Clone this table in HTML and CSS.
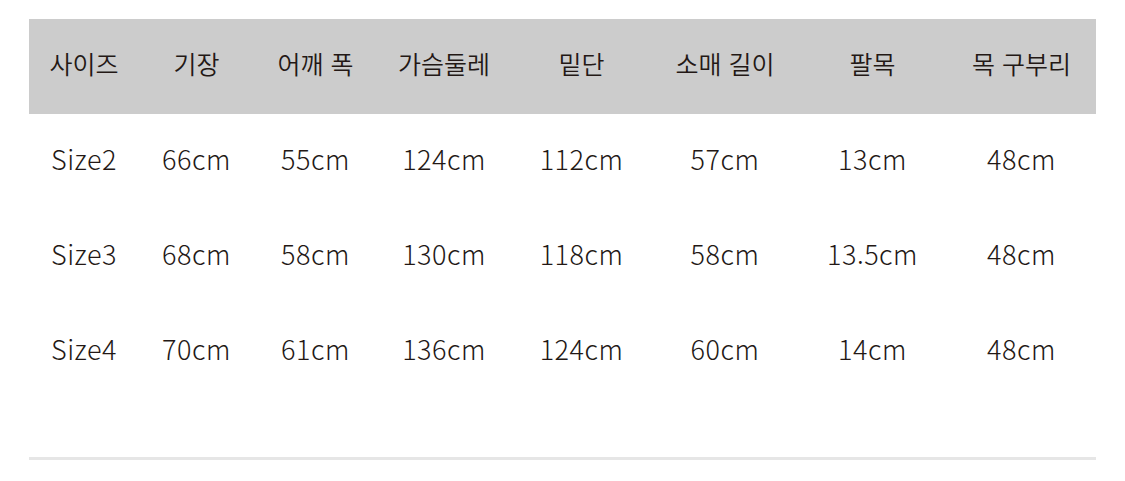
FILE: index.html
```html
<!DOCTYPE html>
<html lang="ko">
<head>
<meta charset="utf-8">
<link rel="stylesheet" href="styles.css">
</head>
<body>
<div class="wrap">
  <table class="size-table">
    <thead>
      <tr>
        <th class="c1">사이즈</th>
        <th class="c2">기장</th>
        <th class="c3">어깨 폭</th>
        <th class="c4">가슴둘레</th>
        <th class="c5">밑단</th>
        <th class="c6">소매 길이</th>
        <th class="c7">팔목</th>
        <th class="c8">목 구부리</th>
      </tr>
    </thead>
    <tbody>
      <tr>
        <td>Size2</td><td>66cm</td><td>55cm</td><td>124cm</td><td>112cm</td><td>57cm</td><td>13cm</td><td>48cm</td>
      </tr>
      <tr>
        <td>Size3</td><td>68cm</td><td>58cm</td><td>130cm</td><td>118cm</td><td>58cm</td><td>13.5cm</td><td>48cm</td>
      </tr>
      <tr>
        <td>Size4</td><td>70cm</td><td>61cm</td><td>136cm</td><td>124cm</td><td>60cm</td><td>14cm</td><td>48cm</td>
      </tr>
    </tbody>
  </table>
</div>
</body>
</html>
```

FILE: styles.css
```css
html, body {
  margin: 0;
  padding: 0;
  background: #ffffff;
}
.wrap {
  padding: 19px 29px 0 29px;
}
.size-table {
  width: 1067px;
  border-collapse: collapse;
  table-layout: fixed;
  font-family: "Noto Sans CJK KR", "Noto Sans", sans-serif;
  color: #231815;
  border-bottom: 3px solid #e6e6e6;
}
.size-table th,
.size-table td {
  text-align: center;
  padding: 0 0 7px 0;
  height: 95px;
  box-sizing: border-box;
  line-height: 1;
  white-space: nowrap;
}
.size-table th {
  font-size: 25px;
  font-weight: 350;
}
.size-table td {
  font-size: 27px;
  font-weight: 300;
  letter-spacing: 0.5px;
}
.size-table thead tr {
  background: #cccccc;
}
.size-table tbody tr:last-child td {
  height: 154px;
  vertical-align: top;
  padding-top: 31px;
}
.c1 { width: 110px; }
.c2 { width: 115px; }
.c3 { width: 123px; }
.c4 { width: 134px; }
.c5 { width: 141px; }
.c6 { width: 146px; }
.c7 { width: 149px; }
.c8 { width: 149px; }
```
